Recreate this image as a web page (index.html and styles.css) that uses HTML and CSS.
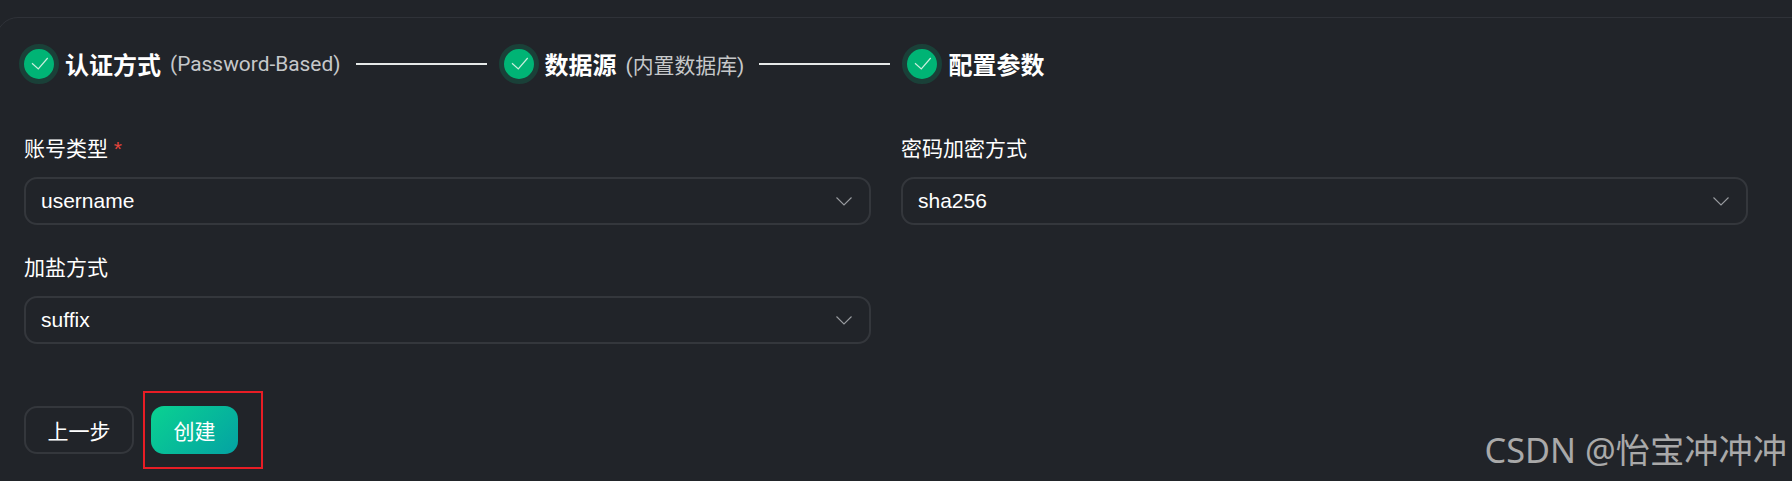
FILE: index.html
```html
<!DOCTYPE html>
<html lang="zh-CN">
<head>
    <meta charset="UTF-8">
    <meta name="viewport" content="width=device-width, initial-scale=1.0">
    <title>创建认证源</title>
    <link rel="stylesheet" href="styles.css">
</head>
<body>
    <div class="card">
        <!-- steps -->
        <div class="steps">
            <div class="step-icon">
                <svg viewBox="0 0 30 30" width="30" height="30"><path d="M8 14.3L14.3 20L23.7 9"></path></svg>
            </div>
            <span class="step-title">认证方式</span>
            <span class="step-sub">(Password-Based)</span>
            <div class="step-line"></div>
            <div class="step-icon">
                <svg viewBox="0 0 30 30" width="30" height="30"><path d="M8 14.3L14.3 20L23.7 9"></path></svg>
            </div>
            <span class="step-title">数据源</span>
            <span class="step-sub">(内置数据库)</span>
            <div class="step-line"></div>
            <div class="step-icon">
                <svg viewBox="0 0 30 30" width="30" height="30"><path d="M8 14.3L14.3 20L23.7 9"></path></svg>
            </div>
            <span class="step-title">配置参数</span>
        </div>

        <!-- form -->
        <div class="form-grid">
            <div class="field">
                <label>账号类型 <span class="required">*</span></label>
                <div class="select">
                    <span>username</span>
                    <svg viewBox="0 0 16 9" width="16" height="9"><path d="M0.5 0.5L8 8L15.5 0.5"></path></svg>
                </div>
            </div>
            <div class="field">
                <label>密码加密方式</label>
                <div class="select">
                    <span>sha256</span>
                    <svg viewBox="0 0 16 9" width="16" height="9"><path d="M0.5 0.5L8 8L15.5 0.5"></path></svg>
                </div>
            </div>
            <div class="field">
                <label>加盐方式</label>
                <div class="select">
                    <span>suffix</span>
                    <svg viewBox="0 0 16 9" width="16" height="9"><path d="M0.5 0.5L8 8L15.5 0.5"></path></svg>
                </div>
            </div>
        </div>

        <div class="actions">
            <button class="btn">上一步</button>
            <button class="btn btn-primary">创建</button>
            <div class="highlight-box"></div>
        </div>
    </div>
    <div class="watermark">CSDN @怡宝冲冲冲</div>
</body>
</html>
```

FILE: styles.css
```css
html, body {
    height: 481px;
}

body {
    font-family: "Liberation Sans", "Noto Sans CJK SC", sans-serif;
    margin: 0;
    background: #212429;
    color: #fff;
    overflow: hidden;
    position: relative;
}

.card {
    margin: 17px 0 0 -4px;
    width: 1840px;
    height: 480px;
    box-sizing: border-box;
    border: 1px solid #2f3238;
    border-radius: 22px;
    padding: 25px 0 0 27px;
}

.steps {
    display: flex;
    align-items: center;
    margin-left: -5px;
    height: 41px;
}

.step-icon {
    width: 30px;
    height: 30px;
    border-radius: 50%;
    background: #00b475;
    border: 5.5px solid #1a4038;
    flex-shrink: 0;
}

.step-icon svg {
    display: block;
}

.step-icon path {
    fill: none;
    stroke: #c9eede;
    stroke-width: 1.2;
}

.step-title {
    font-size: 24px;
    font-weight: 700;
    margin-left: 6px;
    white-space: nowrap;
}

.step-sub {
    font-family: Roboto, "Noto Sans CJK SC", sans-serif;
    font-size: 20.9px;
    color: #c6c8ca;
    margin-left: 9px;
    white-space: nowrap;
}

.step-line {
    width: 131px;
    height: 2px;
    background: #e6e9e8;
    margin: 0 12px 0 15px;
    flex-shrink: 0;
}

.form-grid {
    display: grid;
    grid-template-columns: 847px 847px;
    column-gap: 30px;
    row-gap: 28px;
    margin-top: 50px;
}

.field label {
    display: block;
    font-size: 21px;
    line-height: 30px;
    margin-bottom: 13px;
}

.required {
    color: #e5443b;
}

.select {
    height: 48px;
    box-sizing: border-box;
    border: 2px solid #34373c;
    border-radius: 13px;
    padding: 0 17px 0 15px;
    display: flex;
    justify-content: space-between;
    align-items: center;
    font-size: 21px;
}

.select path {
    fill: none;
    stroke: #999ca0;
    stroke-width: 1.1;
}

.actions {
    position: relative;
    display: flex;
    gap: 17px;
    margin-top: 62px;
}

.btn {
    font-family: inherit;
    font-size: 21px;
    height: 48px;
    width: 110px;
    padding: 0;
    color: #fff;
    background: transparent;
    border: 2px solid #34373c;
    border-radius: 13px;
}

.btn-primary {
    width: 87px;
    border: none;
    background: linear-gradient(135deg, #0ad291, #04a2a3);
}

.highlight-box {
    position: absolute;
    left: 119px;
    top: -15px;
    width: 116px;
    height: 74px;
    border: 2px solid #e81d25;
}

.watermark {
    position: absolute;
    right: 5px;
    top: 427px;
    font-family: "Noto Sans", "Noto Sans CJK SC", sans-serif;
    font-size: 34.25px;
    line-height: 46px;
    color: #a9a9a9;
    white-space: nowrap;
}
```
